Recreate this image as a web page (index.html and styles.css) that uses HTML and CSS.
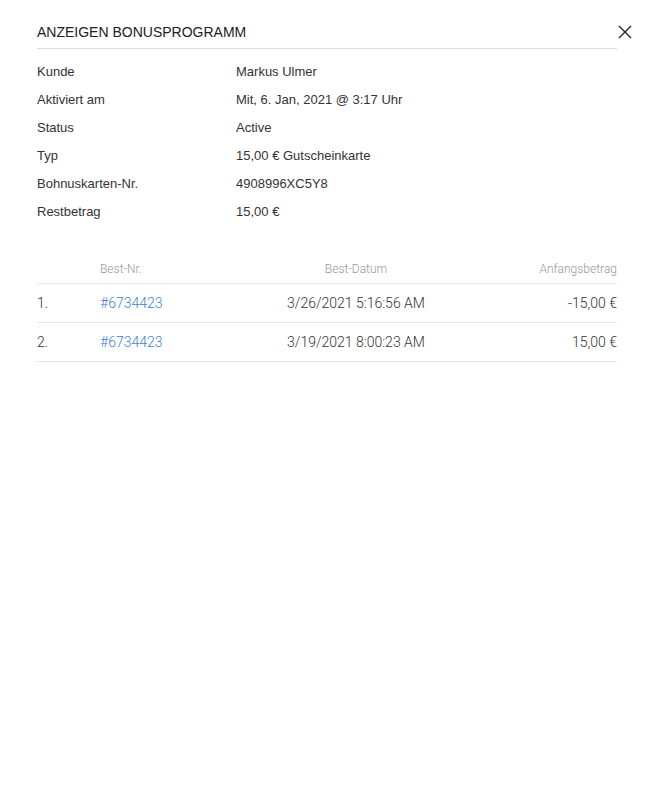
FILE: index.html
```html
<!DOCTYPE html>
<html lang="de">
<head>
<meta charset="utf-8">
<title>Anzeigen Bonusprogramm</title>
<link rel="stylesheet" href="styles.css">
</head>
<body>
<div class="dialog">
  <div class="dialog-header">
    <h1 class="dialog-title">ANZEIGEN BONUSPROGRAMM</h1>
    <button class="close-btn" aria-label="Schließen">
      <svg width="14" height="14" viewBox="0 0 14 14"><path d="M1 1 L13 13 M13 1 L1 13" stroke="#222" stroke-width="1.4" fill="none"/></svg>
    </button>
  </div>
  <dl class="details">
    <dt>Kunde</dt><dd>Markus Ulmer</dd>
    <dt>Aktiviert am</dt><dd>Mit, 6. Jan, 2021 @ 3:17 Uhr</dd>
    <dt>Status</dt><dd>Active</dd>
    <dt>Typ</dt><dd>15,00 € Gutscheinkarte</dd>
    <dt>Bohnuskarten-Nr.</dt><dd>4908996XC5Y8</dd>
    <dt>Restbetrag</dt><dd>15,00 €</dd>
  </dl>
  <div class="orders">
    <div class="orders-row orders-head">
      <span></span>
      <span>Best-Nr.</span>
      <span class="center">Best-Datum</span>
      <span class="right">Anfangsbetrag</span>
    </div>
    <div class="orders-row">
      <span>1.</span>
      <a href="#" class="order-link">#6734423</a>
      <span class="center">3/26/2021 5:16:56 AM</span>
      <span class="right">-15,00 €</span>
    </div>
    <div class="orders-row">
      <span>2.</span>
      <a href="#" class="order-link">#6734423</a>
      <span class="center">3/19/2021 8:00:23 AM</span>
      <span class="right">15,00 €</span>
    </div>
  </div>
</div>
</body>
</html>
```
FILE: styles.css
```css
html, body {
  margin: 0;
  padding: 0;
  background: #fff;
}
body {
  font-family: "Liberation Sans", Arial, sans-serif;
  color: #333;
}
.dialog {
  padding: 20px 18px 0 37px;
}
.dialog-header {
  display: flex;
  align-items: center;
}
.dialog-title {
  margin: 0;
  width: 580px;
  font-size: 14px;
  font-weight: normal;
  color: #222;
  line-height: 24px;
  padding-bottom: 4px;
  border-bottom: 1px solid #ddd;
}
.close-btn {
  border: 0;
  background: none;
  padding: 0;
  margin-left: auto;
  width: 16px;
  height: 16px;
  display: flex;
  align-items: center;
  justify-content: center;
  cursor: pointer;
  position: relative;
  top: -3px;
}
.details {
  margin: 9px 0 0;
  display: grid;
  grid-template-columns: 199px 1fr;
  font-size: 13px;
  line-height: 28px;
  width: 580px;
}
.details dt, .details dd {
  margin: 0;
  color: #333;
}
.orders {
  margin-top: 31px;
  width: 580px;
  font-family: Roboto, "Liberation Sans", sans-serif;
  font-weight: 300;
}
.orders-row {
  display: grid;
  grid-template-columns: 63px 150px 212px 155px;
  align-items: center;
  height: 38px;
  border-bottom: 1px solid #e8e8e8;
  font-size: 14px;
  color: #333;
}
.orders-head {
  height: 26px;
  font-size: 12px;
  color: #999;
  align-items: start;
}
.orders-head span {
  line-height: 14px;
  padding-top: 5px;
}
.center { text-align: center; }
.right { text-align: right; }
.order-link {
  color: #3b7fd9;
  text-decoration: none;
}
```
